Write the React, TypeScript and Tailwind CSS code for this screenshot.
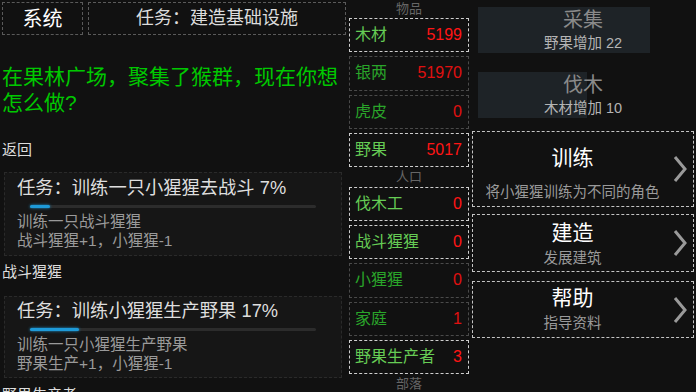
import React from 'react';

// Resource / population counters shown in the middle column
type Counter = { name: string; value: number; active: boolean };

const items: Counter[] = [
  { name: '木材', value: 5199, active: true },
  { name: '银两', value: 51970, active: false },
  { name: '虎皮', value: 0, active: false },
  { name: '野果', value: 5017, active: true },
];

const people: Counter[] = [
  { name: '伐木工', value: 0, active: true },
  { name: '战斗猩猩', value: 0, active: true },
  { name: '小猩猩', value: 0, active: false },
  { name: '家庭', value: 1, active: false },
  { name: '野果生产者', value: 3, active: true },
];

function CounterBox({ c }: { c: Counter }) {
  return (
    <div
      className={`h-[34.3px] flex items-center justify-between pl-[5px] pr-[6px] border border-dashed text-[16px] ${
        c.active ? 'border-[#cfcfcf]' : 'border-[#4a4a4a]'
      }`}
    >
      <span className={c.active ? 'text-[#66cc55]' : 'text-[#2aa52a]'}>{c.name}</span>
      <span className={c.active ? 'text-[#ff1515]' : 'text-[#e01010]'}>{c.value}</span>
    </div>
  );
}

function ColumnHeader({ children, h }: { children: React.ReactNode; h: string }) {
  return <div className={`${h} flex items-center justify-center text-[13px] text-[#666]`}>{children}</div>;
}

function TaskCard({
  title,
  percent,
  lines,
  pt,
  h,
}: {
  title: string;
  percent: number;
  lines: string[];
  pt: string;
  h: string;
}) {
  return (
    <div className={`mx-[4px] ${h} ${pt} border border-dashed border-[#2a2a2a] bg-[#161616] pl-[12px]`}>
      <div className="text-[18.3px] leading-[24px] text-[#dedede]">
        {title} {percent}%
      </div>
      <div className="ml-[13px] mt-[5px] w-[286px] h-[3px] bg-[#2c2c2c] rounded-full">
        <div
          className="h-[3px] rounded-full bg-[#1e9ad8] shadow-[0_0_3px_#1e9ad8]"
          style={{ width: `${percent}%` }}
        />
      </div>
      <div className="mt-[4px] text-[15.5px] leading-[19px] text-[#9a9a9a]">
        {lines.map(l => (
          <div key={l}>{l}</div>
        ))}
      </div>
    </div>
  );
}

function Chevron() {
  return (
    <svg width="16" height="28" viewBox="0 0 16 28" className="shrink-0 mr-[5px]">
      <polyline points="3,2 13,14 3,26" fill="none" stroke="#9a9a9a" strokeWidth="3" />
    </svg>
  );
}

function ActionButton({
  title,
  sub,
  fill,
  mt,
}: {
  title: string;
  sub: string;
  fill: number;
  mt: string;
}) {
  return (
    <div className={`relative ${mt} h-[46px] mr-[2px]`}>
      {/* cooldown fill */}
      <div className="absolute left-[6px] inset-y-0 bg-[#1e2327]" style={{ width: `${fill}%` }} />
      <div className="relative flex flex-col items-center">
        <div className="text-[20px] leading-[24px] mt-[1px] text-[#8a8a8a]">{title}</div>
        <div className="text-[14.5px] leading-[20px] mt-[1px] text-[#b4b4b4]">{sub}</div>
      </div>
    </div>
  );
}

function MenuButton({
  title,
  sub,
  h,
  pt,
  gap,
  mt,
}: {
  title: string;
  sub: string;
  h: string;
  pt: string;
  gap: string;
  mt: string;
}) {
  return (
    <div className={`${mt} ${h} mr-[2px] border border-dashed border-[#c4c4c4] flex items-center`}>
      <div className={`flex-1 self-stretch flex flex-col items-center ${pt}`}>
        <div className="text-[21px] leading-[26px] text-white">{title}</div>
        <div className={`${gap} text-[14.5px] leading-[20px] text-[#9a9a9a]`}>{sub}</div>
      </div>
      <Chevron />
    </div>
  );
}

export default function App() {
  return (
    <div className="w-[696px] h-[392px] overflow-hidden bg-[#111111] flex font-['Liberation_Sans','Noto_Sans_CJK_SC',sans-serif]">
      {/* Left: story + tasks */}
      <div className="w-[346px] shrink-0 flex flex-col overflow-hidden">
        <div className="flex gap-[5px] pl-[2px] pt-[2px]">
          <div className="w-[81px] h-[33px] border border-dashed border-[#5a5a5a] flex items-center justify-center text-[20px] text-white">
            系统
          </div>
          <div className="flex-1 h-[33px] border border-dashed border-[#5a5a5a] flex items-center justify-center text-[18px] text-[#dcdcdc]">
            任务：建造基础设施
          </div>
        </div>

        <div className="mt-[29px] pl-[2px] text-[21px] leading-[26px] text-[#00c800]">
          在果林广场，聚集了猴群，现在你想
          <br />
          怎么做?
        </div>

        <div className="mt-[22px] pl-[2px] text-[15px] leading-[24px] text-[#dddddd]">返回</div>
        <div className="mt-[10px]">
          <TaskCard
            title="任务：训练一只小猩猩去战斗"
            percent={7}
            lines={['训练一只战斗猩猩', '战斗猩猩+1，小猩猩-1']}
            pt="pt-[3px]"
            h="h-[84px]"
          />
        </div>

        <div className="mt-[4px] pl-[2px] text-[15px] leading-[24px] text-[#dddddd]">战斗猩猩</div>
        <div className="mt-[12px]">
          <TaskCard
            title="任务：训练小猩猩生产野果"
            percent={17}
            lines={['训练一只小猩猩生产野果', '野果生产+1，小猩猩-1']}
            pt="pt-[2px]"
            h="h-[82px]"
          />
        </div>

        <div className="mt-[5px] pl-[2px] text-[15px] leading-[24px] text-[#dddddd]">野果生产者</div>
      </div>

      {/* Middle: counters */}
      <div className="w-[126px] shrink-0 px-[3px] flex flex-col">
        <ColumnHeader h="h-[17px]">物品</ColumnHeader>
        <div className="mt-[1px] flex flex-col gap-[4px]">
          {items.map(c => (
            <CounterBox key={c.name} c={c} />
          ))}
        </div>
        <ColumnHeader h="h-[21px]">人口</ColumnHeader>
        <div className="flex flex-col gap-[4px]">
          {people.map(c => (
            <CounterBox key={c.name} c={c} />
          ))}
        </div>
        <ColumnHeader h="h-[21px]">部落</ColumnHeader>
      </div>

      {/* Right: actions */}
      <div className="flex-1 flex flex-col">
        <ActionButton title="采集" sub="野果增加 22" fill={77.5} mt="mt-[7px]" />
        <ActionButton title="伐木" sub="木材增加 10" fill={49} mt="mt-[19px]" />
        <MenuButton title="训练" sub="将小猩猩训练为不同的角色" h="h-[76px]" pt="pt-[13px]" gap="mt-[11px]" mt="mt-[13px]" />
        <MenuButton title="建造" sub="发展建筑" h="h-[58px]" pt="pt-[5px]" gap="mt-[2px]" mt="mt-[7px]" />
        <MenuButton title="帮助" sub="指导资料" h="h-[57px]" pt="pt-[3px]" gap="mt-[2px]" mt="mt-[9px]" />
      </div>
    </div>
  );
}
